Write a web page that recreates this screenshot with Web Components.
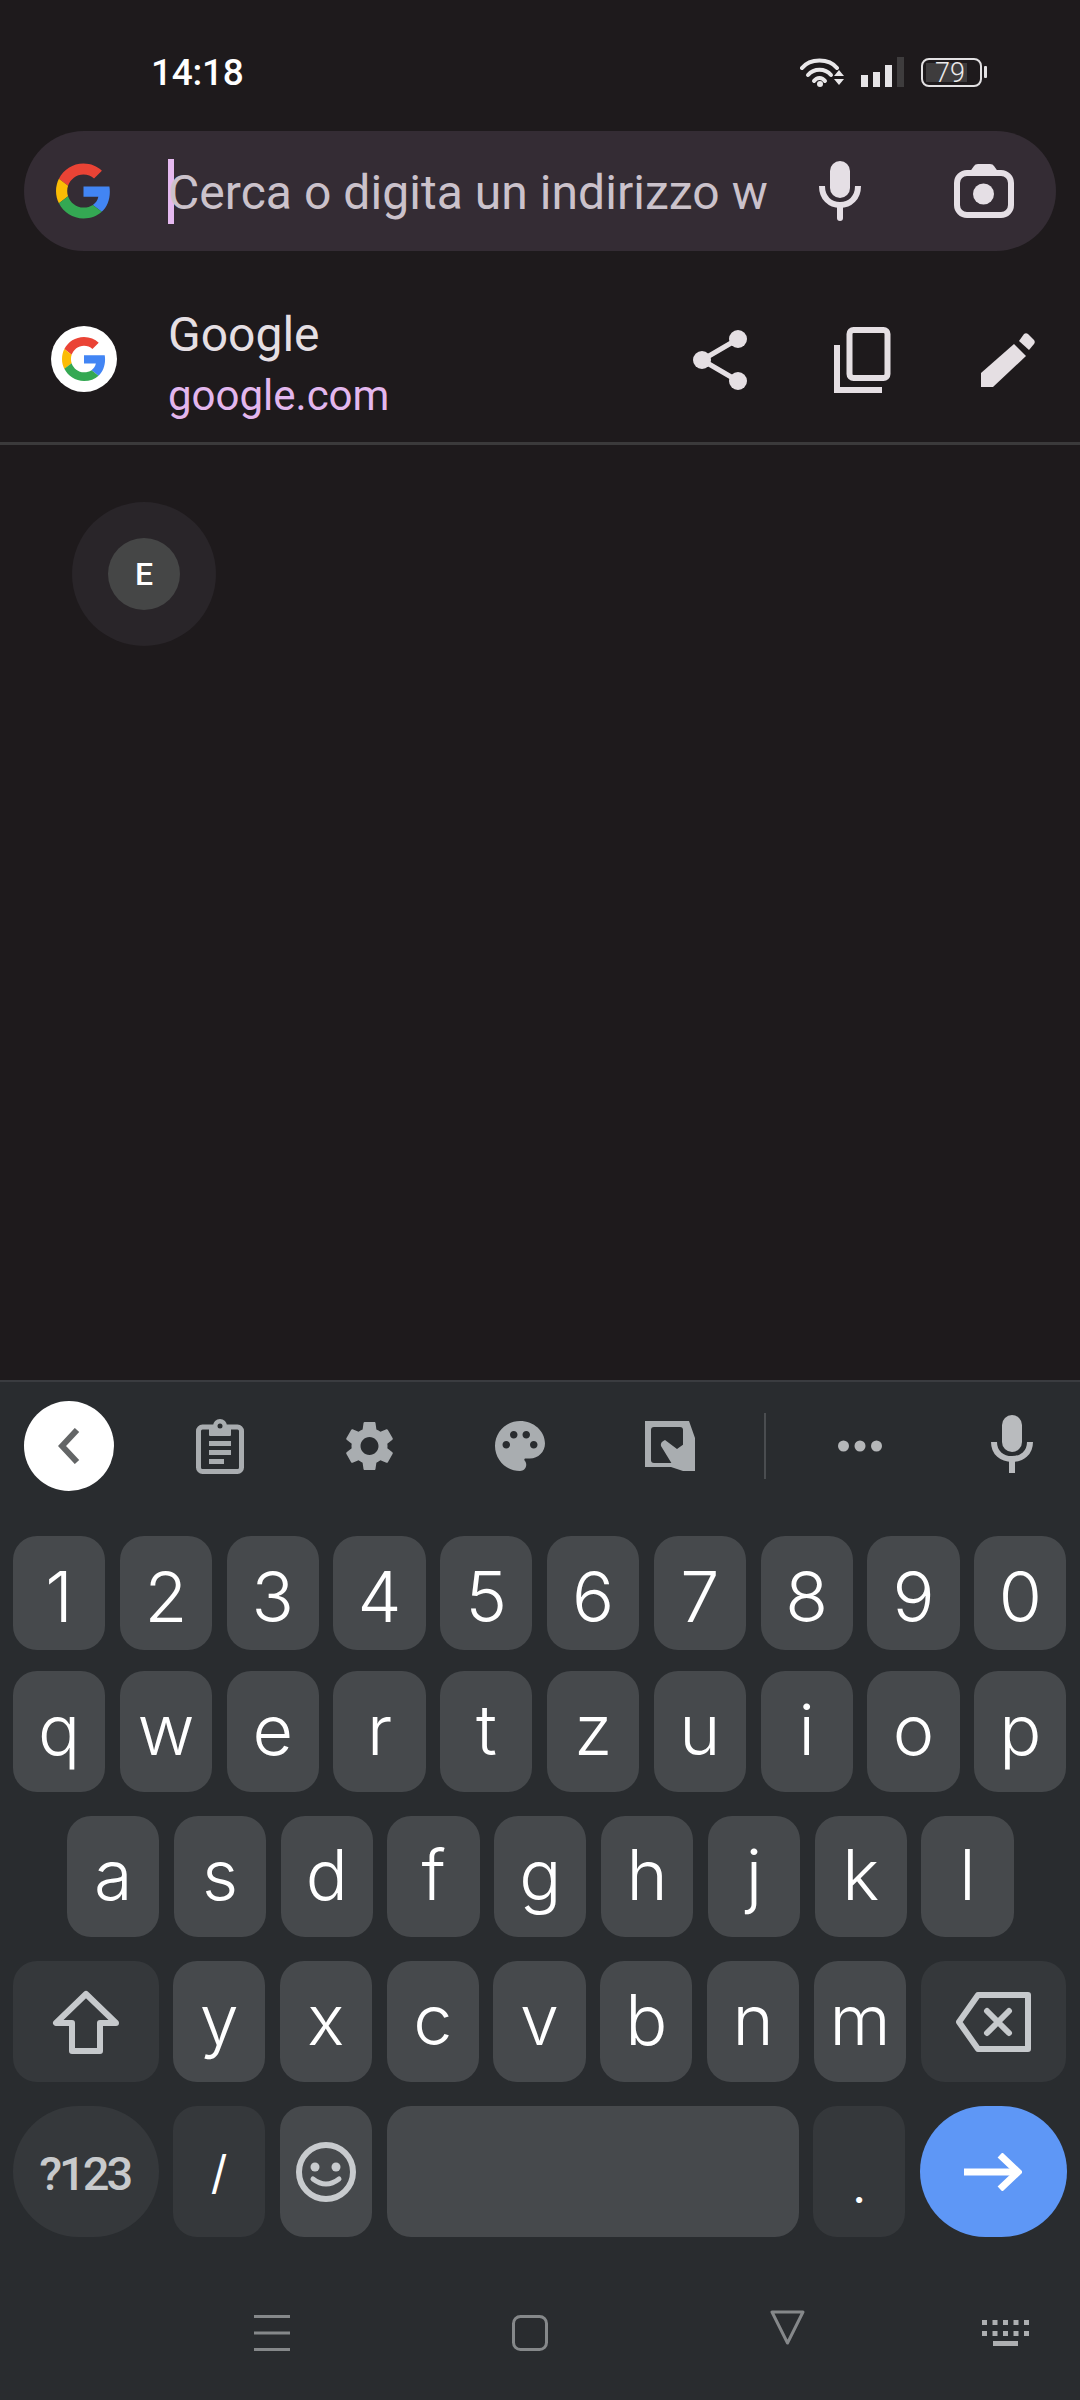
<!DOCTYPE html>
<html lang="it">
<head>
<meta charset="utf-8">
<title>Cerca</title>
<style>
html,body{margin:0;padding:0;background:#1e1a1c;}
body{width:1080px;height:2400px;overflow:hidden;font-family:Roboto,"Liberation Sans",sans-serif;}
</style>
</head>
<body>
<phone-app></phone-app>
<script>
const GOOGLE_G = `<path fill="#EA4335" d="M24 9.5c3.54 0 6.71 1.22 9.21 3.6l6.85-6.85C35.9 2.38 30.47 0 24 0 14.62 0 6.51 5.38 2.56 13.22l7.98 6.19C12.43 13.72 17.74 9.5 24 9.5z"/><path fill="#4285F4" d="M46.98 24.55c0-1.57-.15-3.09-.38-4.55H24v9.02h12.94c-.58 2.96-2.26 5.48-4.78 7.18l7.73 6c4.51-4.18 7.09-10.36 7.09-17.65z"/><path fill="#FBBC05" d="M10.53 28.59c-.48-1.45-.76-2.99-.76-4.59s.27-3.14.76-4.59l-7.98-6.19C.92 16.46 0 20.12 0 24c0 3.88.92 7.54 2.56 10.78l7.97-6.19z"/><path fill="#34A853" d="M24 48c6.48 0 11.93-2.13 15.89-5.81l-7.73-6c-2.15 1.45-4.92 2.3-8.16 2.3-6.26 0-11.57-4.22-13.47-9.91l-7.98 6.19C6.51 42.62 14.62 48 24 48z"/>`;

function define(name, css, html){
  customElements.define(name, class extends HTMLElement{
    constructor(){
      super();
      const r = this.attachShadow({mode:'open'});
      r.innerHTML = `<style>${css}</style>${html}`;
    }
  });
}

define('status-bar', `
  :host{display:flex;height:131px;box-sizing:border-box;padding:49px 0 0 151px;align-items:flex-start;color:#fff;font-family:Roboto,sans-serif}
  .t{font-size:37px;font-weight:500;line-height:48px;height:48px;letter-spacing:-.3px}
  .sp{flex:1}
  svg{display:block}
  .w{margin-top:6px}.s{margin:8px 0 0 16px}
  .b{margin:9px 0 0 17px;width:61px;height:29px;box-sizing:border-box;border:2.5px solid #e3e1e3;border-radius:8px;padding:3px;display:flex}
  .f{width:41px;background:#3e3c3d;color:#ecebec;font-size:27px;font-weight:300;line-height:18px;box-sizing:border-box;padding-right:2px;display:flex;align-items:center;justify-content:flex-end}
  .tip{margin:17px 0 0 2px;width:3px;height:12px;background:#e3e1e3;border-radius:1px}
  .end{width:93px}
`,`
  <span class="t">14:18</span><span class="sp"></span>
  <svg class="w" width="45" height="32" viewBox="0 0 45 32" fill="none" stroke="#e9e7e9" stroke-width="4" stroke-linecap="round">
    <path d="M2 13C10 3 29 3 37 13"/><path d="M8 20C14 13 25 13 31 20"/><path d="M14 26C17 22 22 22 25 26"/>
    <circle cx="20" cy="29" r="3" fill="#e9e7e9" stroke="none"/>
    <path d="M39 15L44 21H34Z M34 24H44L39 30Z" fill="#e9e7e9" stroke="none"/>
  </svg>
  <svg class="s" width="43" height="30" viewBox="0 0 43 30">
    <rect x="0" y="18" width="7" height="12" fill="#e6e4e6"/><rect x="12" y="15" width="7" height="15" fill="#e6e4e6"/>
    <rect x="24" y="8" width="7" height="22" fill="#e6e4e6"/><rect x="36" y="0" width="7" height="30" fill="#3e3c3d"/>
  </svg>
  <div class="b"><div class="f">79</div></div><div class="tip"></div><div class="end"></div>
`);

define('search-bar', `
  :host{display:flex;align-items:center;box-sizing:border-box;height:120px;margin:0 24px;border-radius:60px;background:#342c34;padding-left:32px;font-family:Roboto,sans-serif}
  svg{display:block;flex:none}
  .c{width:6px;height:65px;background:#e5b9f0;margin-left:57px;flex:none}
  .x{font-size:48px;line-height:65px;padding-top:3px;color:#cbc2cb;margin-left:-6px;width:602px;white-space:nowrap;overflow:hidden;flex:none;letter-spacing:.05px}
  .m{margin-left:49px}.k{margin-left:93px;}
`,`
  <svg width="55" height="56" viewBox="0 0 48 48">${GOOGLE_G}</svg>
  <span class="c"></span><span class="x">Cerca o digita un indirizzo w</span>
  <svg class="m" width="42" height="60" viewBox="0 0 42 60" fill="none" stroke="#e5dfe5" stroke-width="6" stroke-linecap="round">
    <rect x="11" y="0" width="20" height="37" rx="10" fill="#e5dfe5" stroke="none"/>
    <path d="M3 25C3 37 11 44 21 44C31 44 39 37 39 25" stroke-linecap="butt"/><path d="M21 45V57"/>
  </svg>
  <svg class="k" width="60" height="54" viewBox="0 0 60 54" fill="none">
    <rect x="3" y="9" width="54" height="42" rx="10" stroke="#e5dfe5" stroke-width="6"/>
    <path d="M15 9L20 2Q21 0 24 0H36Q39 0 40 2L45 9Z" fill="#e5dfe5"/>
    <circle cx="29.5" cy="30" r="10.5" fill="#e5dfe5"/>
  </svg>
`);

define('site-row', `
  :host{display:flex;align-items:flex-start;box-sizing:border-box;height:194px;padding-left:51px;border-bottom:3px solid #3b3a3b;font-family:Roboto,sans-serif}
  svg{display:block;flex:none}
  .ic{width:66px;height:66px;border-radius:50%;background:#fff;display:flex;align-items:center;justify-content:center;margin:75px 0 0 0;flex:none}
  .tx{margin:62px 0 0 51px;width:521px;flex:none}
  .a{font-size:48px;line-height:44px;color:#e5dfe3}
  .b{font-size:42px;line-height:44px;margin-top:17px;color:#e3b7ee}
  .sh{margin:79px 0 0 4px}.co{margin:76px 0 0 87px}.pe{margin:82px 0 0 90px}
`,`
  <div class="ic"><svg width="44" height="46" viewBox="0 0 48 48">${GOOGLE_G}</svg></div>
  <div class="tx"><div class="a">Google</div><div class="b">google.com</div></div>
  <svg class="sh" width="54" height="60" viewBox="0 0 54 60" fill="#e5dfe3" stroke="#e5dfe3">
    <path d="M45 9L9 30L45 51" fill="none" stroke-width="5"/>
    <circle cx="9" cy="30" r="9" stroke="none"/><circle cx="45" cy="9" r="9" stroke="none"/><circle cx="45" cy="51" r="9" stroke="none"/>
  </svg>
  <svg class="co" width="57" height="66" viewBox="0 0 57 66" fill="none" stroke="#e5dfe3" stroke-width="6">
    <rect x="15.5" y="3" width="38" height="48" rx="4"/><path d="M3 18V63H48"/>
  </svg>
  <svg class="pe" width="54" height="54" viewBox="0 0 54 54" fill="#e5dfe3">
    <path d="M0 40L33 11L45 23L12 54H0Z"/>
    <path d="M38 8L43 1Q45 -.5 47 1L53 7Q54.5 9 53 11L48 17Z"/>
  </svg>
`);

define('tab-tile', `
  :host{display:flex;width:144px;height:144px;margin:57px 0 0 72px;border-radius:50%;background:#292529;align-items:center;justify-content:center;font-family:Roboto,sans-serif}
  .i{width:72px;height:72px;border-radius:50%;background:#454646;display:flex;align-items:center;justify-content:center;color:#fff;font-size:32px;font-weight:500;line-height:72px}
`,`<div class="i"><slot></slot></div>`);

define('kb-toolbar', `
  :host{display:flex;align-items:center;height:128px;padding-left:24px;flex:none}
  svg{display:block;flex:none}
  .back{width:90px;height:90px;border-radius:50%;background:#fff;display:flex;align-items:center;justify-content:center;flex:none}
  .div{width:2px;height:66px;background:#4a4d50;margin-left:69px;flex:none}
`,`
  <div class="back"><svg width="22" height="36" viewBox="0 0 22 36" fill="none" stroke="#636566" stroke-width="6"><path d="M19 2L4 18L19 34"/></svg></div>
  <svg style="margin-left:82px" width="48" height="55" viewBox="0 0 48 55" fill="#a9adb0">
    <rect x="2.5" y="8" width="43" height="44.5" rx="4" fill="none" stroke="#a9adb0" stroke-width="5"/>
    <rect x="13" y="6" width="22" height="11" rx="1"/><circle cx="24" cy="7" r="7"/><circle cx="24" cy="7" r="2.5" fill="#292c2f"/>
    <rect x="13" y="22" width="22" height="5"/><rect x="13" y="31" width="22" height="5"/><rect x="13" y="40" width="15" height="5"/>
  </svg>
  <svg style="margin-left:101px" width="49" height="50" viewBox="2.5 2 19 20" fill="#a9adb0"><path d="M19.14 12.94c.04-.3.06-.61.06-.94 0-.32-.02-.64-.07-.94l2.03-1.58c.18-.14.23-.41.12-.61l-1.92-3.32c-.12-.22-.37-.29-.59-.22l-2.39.96c-.5-.38-1.03-.7-1.62-.94l-.36-2.54c-.04-.24-.24-.41-.48-.41h-3.84c-.24 0-.43.17-.47.41l-.36 2.54c-.59.24-1.13.57-1.62.94l-2.39-.96c-.22-.08-.47 0-.59.22L2.74 8.87c-.12.21-.08.47.12.61l2.03 1.58c-.05.3-.09.63-.09.94s.02.64.07.94l-2.03 1.58c-.18.14-.23.41-.12.61l1.92 3.32c.12.22.37.29.59.22l2.39-.96c.5.38 1.03.7 1.62.94l.36 2.54c.05.24.24.41.48.41h3.84c.24 0 .44-.17.47-.41l.36-2.54c.59-.24 1.13-.56 1.62-.94l2.39.96c.22.08.47 0 .59-.22l1.92-3.32c.12-.22.07-.47-.12-.61l-2.01-1.58zM12 15.6c-1.98 0-3.6-1.62-3.6-3.6s1.62-3.6 3.6-3.6 3.6 1.62 3.6 3.6-1.62 3.6-3.6 3.6z"/></svg>
  <svg style="margin-left:101px" width="50" height="50" viewBox="2 2 20 20" fill="#a9adb0"><path d="M12 2C6.49 2 2 6.49 2 12s4.49 10 10 10c1.38 0 2.5-1.12 2.5-2.5 0-.61-.23-1.2-.64-1.67-.08-.1-.13-.21-.13-.33 0-.28.22-.5.5-.5H16c3.31 0 6-2.69 6-6 0-4.96-4.49-9-10-9zm-5.5 11c-.83 0-1.5-.67-1.5-1.5S5.67 10 6.5 10s1.5.67 1.5 1.5S7.33 13 6.5 13zm3-4C8.67 9 8 8.33 8 7.5S8.67 6 9.5 6s1.5.67 1.5 1.5S10.33 9 9.5 9zm5 0c-.83 0-1.5-.67-1.5-1.5S13.67 6 14.5 6s1.5.67 1.5 1.5S15.33 9 14.5 9zm3 4c-.83 0-1.5-.67-1.5-1.5s.67-1.5 1.5-1.5 1.5.67 1.5 1.5-.67 1.5-1.5 1.5z"/></svg>
  <svg style="margin-left:100px" width="50" height="50" viewBox="0 0 50 50">
    <path d="M0 0H44L50 17V50H38L26 46H0Z" fill="#a9adb0"/>
    <rect x="6" y="6" width="32" height="36" rx="3" fill="#292c2f"/>
    <path d="M16 25Q15 21 20 19L32 28L39 23V45L27 43Z" fill="#a9adb0"/>
  </svg>
  <span class="div"></span>
  <svg style="margin-left:72px" width="44" height="12" viewBox="0 0 44 12" fill="#b5b7b9"><circle cx="5.5" cy="6" r="5.5"/><circle cx="22" cy="6" r="5.5"/><circle cx="38.5" cy="6" r="5.5"/></svg>
  <svg style="margin:-4px 0 0 109px" width="42" height="58" viewBox="0 0 42 58" fill="none" stroke="#b9bbbe" stroke-width="6">
    <rect x="11" y="0" width="20" height="37" rx="10" fill="#b9bbbe" stroke="none"/>
    <path d="M3 27C3 38 11 44 21 44C31 44 39 38 39 27"/><path d="M21 44V58"/>
  </svg>
`);

define('kb-row', `
  :host{display:flex;gap:14.5px;padding-left:13px;height:var(--h,121px);margin-top:var(--m,24px);flex:none}
  :host([inset]){padding-left:67px}
`,`<slot></slot>`);

define('kb-key', `
  :host{display:flex;align-items:center;justify-content:center;box-sizing:border-box;width:92.3px;flex:none;height:100%;border-radius:24px;background:#46494c;color:#fff;font-family:Inter,Roboto,sans-serif;font-size:70px;font-weight:350;line-height:1;padding-bottom:var(--pb,3px);padding-top:var(--pt,0)}
  :host([kind=fn]){background:#35383b;color:#c8cacc;width:145.5px;padding:0}
  :host([kind=sym]){background:#35383b;font-size:46px;font-weight:400;padding:0}
  :host([kind=icon]){padding:0}
  :host([kind=space]){width:412px;padding:0}
  :host([kind=pill]){background:#35383b;color:#c8cacc;width:145.5px;border-radius:66px;padding:3px 2px 0 0;font-family:Roboto,sans-serif;font-size:47px;font-weight:500;letter-spacing:-3px}
  :host([kind=go]){background:#5e97f6;width:147px;border-radius:66px;padding:0}
`,`<slot></slot>`);

define('kb-nav', `
  :host{display:flex;flex:1;padding-left:254px;align-items:flex-start}
  svg{display:block;flex:none}
`,`
  <svg style="margin-top:78px" width="36" height="36" viewBox="0 0 36 36" fill="#85888a"><rect y="0" width="36" height="3"/><rect y="16.5" width="36" height="3"/><rect y="33" width="36" height="3"/></svg>
  <svg style="margin:78px 0 0 222px" width="36" height="36" viewBox="0 0 36 36" fill="none" stroke="#85888a" stroke-width="3"><rect x="1.5" y="1.5" width="33" height="33" rx="7"/></svg>
  <svg style="margin:73px 0 0 222px" width="35" height="35" viewBox="0 0 35 35" fill="none" stroke="#85888a" stroke-width="3" stroke-linejoin="round"><path d="M2 2H33L17.5 33Z"/></svg>
  <svg style="margin:83px 0 0 177px" width="47" height="26" viewBox="0 0 47 26" fill="#adafb1">
    <path d="M0 0h5v5H0zM10.500 0h5v5h-5zM21 0h5v5h-5zM31.500 0h5v5h-5zM42 0h5v5h-5zM0 11h5v5H0zM10.500 11h5v5h-5zM21 11h5v5h-5zM31.500 11h5v5h-5zM42 11h5v5h-5zM11 21h25v5H11z"/>
  </svg>
`);

define('app-keyboard', `
  :host{display:flex;flex-direction:column;flex:none;height:1020px;box-sizing:border-box;background:#292c2f;border-top:2px solid #3a3c40}
  kb-row.first{--h:114px;--m:26px;--pt:8px;--pb:0px}
  kb-row.r2{--m:21px}
  kb-row.r5{--h:131px}
  svg{display:block}
`,`
  <kb-toolbar></kb-toolbar>
  <kb-row class="first">${[...'1234567890'].map(c=>`<kb-key>${c}</kb-key>`).join('')}</kb-row>
  <kb-row class="r2">${[...'qwertzuiop'].map(c=>`<kb-key>${c}</kb-key>`).join('')}</kb-row>
  <kb-row inset>${[...'asdfghjkl'].map(c=>`<kb-key>${c}</kb-key>`).join('')}</kb-row>
  <kb-row>
    <kb-key kind="fn"><svg width="68" height="64" viewBox="0 0 68 64" fill="none" stroke="#c6c9cc" stroke-width="6" stroke-linejoin="round"><path d="M34 4L4 33H20V61H48V33H64Z"/></svg></kb-key>
    ${[...'yxcvbnm'].map(c=>`<kb-key>${c}</kb-key>`).join('')}
    <kb-key kind="fn"><svg width="75" height="60" viewBox="0 0 75 60" fill="none" stroke="#c6c9cc" stroke-width="6" stroke-linejoin="round"><path d="M22 3H72V57H22L3 30Z"/><path d="M31 19L53 41M53 19L31 41" stroke-linecap="round"/></svg></kb-key>
  </kb-row>
  <kb-row class="r5">
    <kb-key kind="pill">?123</kb-key>
    <kb-key kind="sym">/</kb-key>
    <kb-key kind="icon"><svg width="60" height="60" viewBox="0 0 60 60" fill="none" stroke="#c8cbce" stroke-width="6"><circle cx="30" cy="30" r="27"/><circle cx="19" cy="25" r="4.500" fill="#c8cbce" stroke="none"/><circle cx="40" cy="25" r="4.500" fill="#c8cbce" stroke="none"/><path d="M17 37Q30 47 43 37" stroke-linecap="round" stroke-width="5"/></svg></kb-key>
    <kb-key kind="space"></kb-key>
    <kb-key kind="sym"><span style="padding-top:28px">.</span></kb-key>
    <kb-key kind="go"><svg width="58" height="38" viewBox="0 0 58 38" fill="none" stroke="#fff" stroke-width="7"><path d="M0 19H53"/><path d="M36 2L54 19L36 36"/></svg></kb-key>
  </kb-row>
  <kb-nav></kb-nav>
`);

define('phone-app', `
  :host{display:flex;flex-direction:column;width:1080px;height:2400px;background:#1e1a1c}
  .body{flex:1;min-height:0}
`,`
  <status-bar></status-bar>
  <search-bar></search-bar>
  <site-row></site-row>
  <div class="body"><tab-tile>E</tab-tile></div>
  <app-keyboard></app-keyboard>
`);
</script>
</body>
</html>
